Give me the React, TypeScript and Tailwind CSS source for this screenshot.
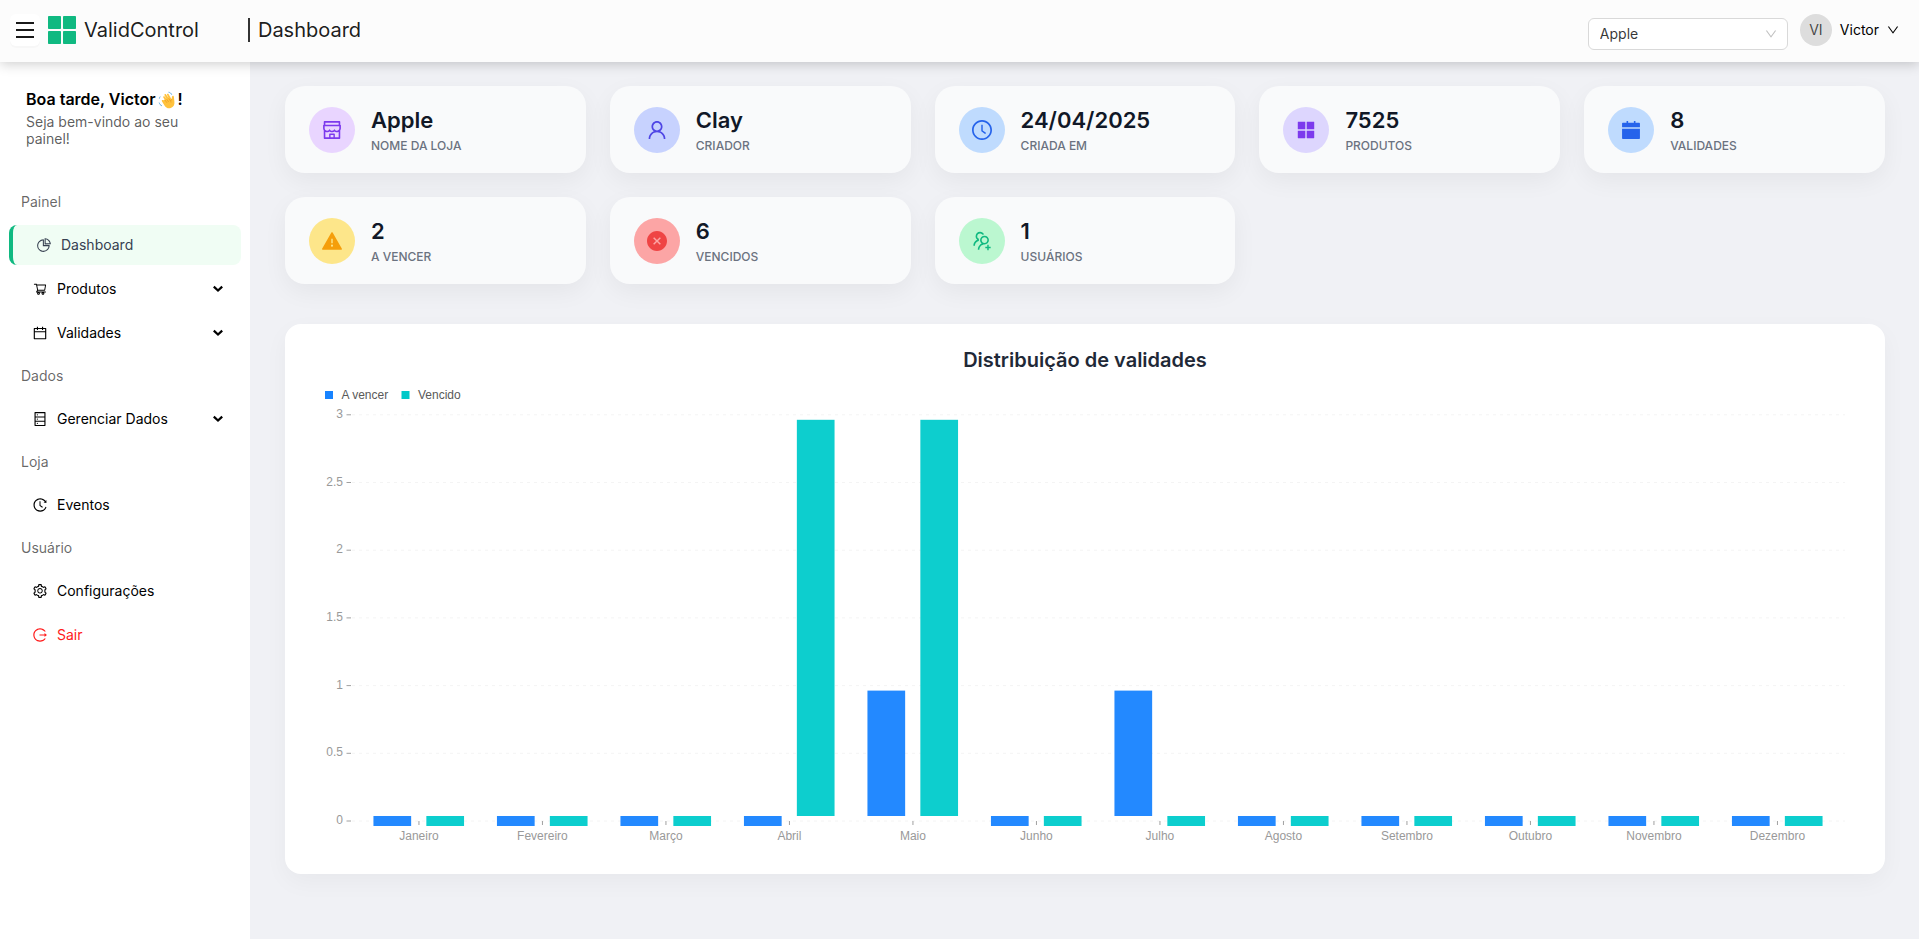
import type { ReactNode } from "react";
import type { IconType } from "react-icons";
import {
  AiFillAppstore,
  AiFillCalendar,
  AiFillCloseCircle,
  AiFillWarning,
  AiOutlineCalendar,
  AiOutlineClockCircle,
  AiOutlineDatabase,
  AiOutlineDown,
  AiOutlineHistory,
  AiOutlineLogout,
  AiOutlinePieChart,
  AiOutlineSetting,
  AiOutlineShop,
  AiOutlineShoppingCart,
  AiOutlineUser,
  AiOutlineUsergroupAdd,
} from "react-icons/ai";

// Trims the blank margin that the icon set leaves around most glyphs; the cart fills its whole box.
function Icon({ of: Glyph, className }: { of: IconType; className: string }) {
  const viewBox = Glyph === AiOutlineShoppingCart ? "0 0 1024 1024" : "64 64 896 896";
  return <Glyph viewBox={viewBox} className={className} aria-hidden="true" />;
}

function Logo() {
  return (
    <svg className="size-7" viewBox="0 0 28 28" fill="#10b981" aria-hidden="true">
      <rect width="13" height="13" rx="0.8" />
      <rect x="15" width="13" height="13" rx="0.8" />
      <rect y="15" width="13" height="13" rx="0.8" />
      <rect x="15" y="15" width="13" height="13" rx="0.8" />
    </svg>
  );
}

function Caret() {
  return (
    <svg className="h-2 w-3" viewBox="0 0 12 8" fill="none" stroke="currentColor" strokeWidth="2.2" aria-hidden="true">
      <path d="M1.8 1.6 6 5.6l4.2-4" />
    </svg>
  );
}

function Header() {
  return (
    <header className="relative z-10 flex h-[62px] items-center bg-[#fcfcfc] pr-5 pb-0.5 pl-2.5 shadow-[0_2px_12px_rgba(0,0,0,0.2)]">
      <button aria-label="Menu" className="flex h-8 w-[30px] items-center justify-center rounded-md bg-white text-black/90 shadow-[0_2px_0_rgba(0,0,0,0.02)]">
        <svg className="h-4 w-[18px]" viewBox="0 0 18 16" stroke="currentColor" strokeWidth="1.9" aria-hidden="true">
          <path d="M0 1h18M0 8h18M0 15h18" />
        </svg>
      </button>
      <a href="#" className="ml-2 flex items-center gap-2 text-xl text-black/90">
        <Logo />
        ValidControl
      </a>
      <h1 className="ml-[49px] flex items-center gap-2 text-xl text-black/90">
        <span className="h-6 w-0.5 bg-black/80" />
        Dashboard
      </h1>
      <div className="ml-auto flex items-center">
        <div className="relative mt-2 mr-3">
          <select aria-label="Loja" className="h-8 w-[200px] appearance-none rounded-md border border-[#d9d9d9] bg-white px-[11px] text-sm text-black/80">
            <option>Apple</option>
          </select>
          <span className="pointer-events-none absolute top-2.5 right-[11px] text-black/25">
            <Icon of={AiOutlineDown} className="size-3" />
          </span>
        </div>
        <button className="flex items-center gap-2 text-sm text-black">
          <span className="flex size-8 items-center justify-center rounded-full bg-[#dddddd] text-black/70">VI</span>
          Victor
          <Icon of={AiOutlineDown} className="size-3" />
        </button>
      </div>
    </header>
  );
}

function Group({ title, children }: { title: string; children: ReactNode }) {
  return (
    <section>
      <h2 className="my-0.5 px-[21px] py-2.5 text-sm leading-[22px] text-black/60">{title}</h2>
      <ul className="flex flex-col gap-1">{children}</ul>
    </section>
  );
}

type ItemProps = { icon: IconType; label: string; expandable?: boolean; danger?: boolean };

function Item({ icon, label, expandable, danger }: ItemProps) {
  return (
    <li className="px-1">
      <a href="#" className={`flex h-10 items-center gap-2.5 rounded-lg pr-[22px] pl-[29px] text-sm ${danger ? "text-[#ff1a1a]" : "text-black"}`}>
        <Icon of={icon} className="size-3.5" />
        {label}
        {expandable && (
          <span className="ml-auto">
            <Caret />
          </span>
        )}
      </a>
    </li>
  );
}

function Wave() {
  return (
    <svg className="mx-0.5 inline-block size-[18px] align-[-4px]" viewBox="0 0 18 18" aria-label="👋" role="img">
      <path
        d="M5.2 8.4 3.7 6.1c-.6-1 .7-1.8 1.4-.9l2 2.6-2.2-4c-.5-1 .9-1.8 1.6-.8l2.6 4-1.700-3.600c-.4-1 .9-1.600 1.500-.7l3 5.100.5-2.400c.2-1.400 1.900-1.200 1.900.2l.5 4.700c.4 3.100-1 5.400-3.600 6.300-2.700.8-4.900-.3-6.300-2.600L2.300 9.800c-.5-1 .6-1.700 1.300-.9z"
        transform="translate(1.6 .4)"
        fill="#ffc23d"
      />
      <path d="m6.800 8.800 2.200 3M8.700 8.200l2 2.800M10.700 7.400l1.800 2.600M13.900 8.200c-1 .8-1.400 1.900-.9 3.300" stroke="#e8961e" strokeWidth=".7" fill="none" />
      <path d="M10.500 1.200c1.500.2 2.700 1.100 3.200 2.500M1.200 11.600c.3 1.500 1.300 2.600 2.700 3.200M1.400 7.600c.1-.8.300-1.400.8-2" stroke="#4fa3dc" strokeWidth=".9" fill="none" />
    </svg>
  );
}

function Sidebar() {
  return (
    <aside className="w-[250px] shrink-0 bg-white">
      <div className="px-[26px] pt-[27px] pb-8">
        <p className="text-base leading-5 font-semibold whitespace-nowrap text-black">
          Boa tarde, Victor
          <Wave />!
        </p>
        <p className="mt-1 text-sm leading-[17px] text-black/65">Seja bem-vindo ao seu painel!</p>
      </div>
      <nav>
        <Group title="Painel">
          <li className="px-[9px]">
            <a href="#" aria-current="page" className="flex h-10 items-center gap-2.5 rounded-lg border-l-4 border-[#10b981] bg-[#f0fdf4] pl-6 text-sm text-[#374151]">
              <Icon of={AiOutlinePieChart} className="size-3.5" />
              Dashboard
            </a>
          </li>
          <Item icon={AiOutlineShoppingCart} label="Produtos" expandable />
          <Item icon={AiOutlineCalendar} label="Validades" expandable />
        </Group>
        <Group title="Dados">
          <Item icon={AiOutlineDatabase} label="Gerenciar Dados" expandable />
        </Group>
        <Group title="Loja">
          <Item icon={AiOutlineHistory} label="Eventos" />
        </Group>
        <Group title="Usuário">
          <Item icon={AiOutlineSetting} label="Configurações" />
          <Item icon={AiOutlineLogout} label="Sair" danger />
        </Group>
      </nav>
    </aside>
  );
}

const stats = [
  { value: "Apple", label: "Nome da loja", icon: AiOutlineShop, tone: "bg-[#e9d5ff] text-[#7c3aed]" },
  { value: "Clay", label: "Criador", icon: AiOutlineUser, tone: "bg-[#c7d2fe] text-[#4f46e5]" },
  { value: "24/04/2025", label: "Criada em", icon: AiOutlineClockCircle, tone: "bg-[#bfdbfe] text-[#2563eb]" },
  { value: "7525", label: "Produtos", icon: AiFillAppstore, tone: "bg-[#ddd6fe] text-[#7c3aed]" },
  { value: "8", label: "Validades", icon: AiFillCalendar, tone: "bg-[#bfdbfe] text-[#2563eb]" },
  { value: "2", label: "A vencer", icon: AiFillWarning, tone: "bg-[#fde68a] text-[#f59e0b]" },
  { value: "6", label: "Vencidos", icon: AiFillCloseCircle, tone: "bg-[#fca5a5] text-[#ef4444]" },
  { value: "1", label: "Usuários", icon: AiOutlineUsergroupAdd, tone: "bg-[#bbf7d0] text-[#10b981]" },
];

function Stats() {
  return (
    <div className="grid grid-cols-5 gap-6">
      {stats.map((s) => (
        <div key={s.label} className="flex h-[87px] items-center gap-4 rounded-[20px] bg-[#f9fafb] px-6 shadow-[0_8px_24px_rgba(0,0,0,0.05)]">
          <span className={`flex size-[46px] shrink-0 items-center justify-center rounded-full ${s.tone}`}>
            <Icon of={s.icon} className="size-5" />
          </span>
          <div>
            <p className="text-[22px] leading-[30px] font-semibold text-[#111827]">{s.value}</p>
            <p className="mt-0.5 text-xs leading-[18px] font-medium text-[#6b7280] uppercase">{s.label}</p>
          </div>
        </div>
      ))}
    </div>
  );
}

const months = [
  { name: "Janeiro", due: 0, expired: 0 },
  { name: "Fevereiro", due: 0, expired: 0 },
  { name: "Março", due: 0, expired: 0 },
  { name: "Abril", due: 0, expired: 3 },
  { name: "Maio", due: 1, expired: 3 },
  { name: "Junho", due: 0, expired: 0 },
  { name: "Julho", due: 1, expired: 0 },
  { name: "Agosto", due: 0, expired: 0 },
  { name: "Setembro", due: 0, expired: 0 },
  { name: "Outubro", due: 0, expired: 0 },
  { name: "Novembro", due: 0, expired: 0 },
  { name: "Dezembro", due: 0, expired: 0 },
];

const LEFT = 48.2;
const STEP = 123.5;
const BASE = 442;
const UNIT = 135.4;

function Bar({ x, value, color }: { x: number; value: number; color: string }) {
  const top = value === 0 ? BASE - 5 : BASE + 5 - value * UNIT;
  const height = value === 0 ? 10 : value * UNIT - 10;
  return <rect x={x} y={top} width="37.7" height={height} fill={color} />;
}

function Chart() {
  return (
    <section className="mt-10 rounded-2xl bg-white px-6 pt-6 pb-7 shadow-[0_8px_24px_rgba(0,0,0,0.04)]">
      <h2 className="text-center text-xl leading-6 font-semibold text-[#1f2937]">Distribuição de validades</h2>
      <svg className="mt-[7px] block h-auto w-full font-['Liberation_Sans',Arial,sans-serif] text-xs" viewBox="0 0 1552 467" role="img" aria-label="Distribuição de validades">
        <g fill="#595959">
          <rect x="16" y="12" width="8" height="8" fill="#1783ff" />
          <text x="32.5" y="20">A vencer</text>
          <rect x="92.5" y="12" width="8" height="8" fill="#00c9c9" />
          <text x="109" y="20">Vencido</text>
        </g>
        {[0, 0.5, 1, 1.5, 2, 2.5, 3].map((v) => {
          const y = BASE - v * UNIT;
          return (
            <g key={v}>
              <line x1="43" x2="1536" y1={y} y2={y} stroke="#f4f4f4" strokeDasharray="3 4" />
              <line x1="37.5" x2="42" y1={y} y2={y} stroke="#a0a0a0" />
              <text x="34" y={y + 3} textAnchor="end" fill="#999999">{v}</text>
            </g>
          );
        })}
        {months.map((m, i) => {
          const cx = LEFT + STEP * (i + 0.5);
          return (
            <g key={m.name}>
              <Bar x={cx - 45.5} value={m.due} color="#2389ff" />
              <Bar x={cx + 7.4} value={m.expired} color="#0dcece" />
              <line x1={cx} x2={cx} y1={BASE} y2={BASE + 4} stroke="#a0a0a0" />
              <text x={cx} y={BASE + 18.5} textAnchor="middle" fill="#999999">{m.name}</text>
            </g>
          );
        })}
      </svg>
    </section>
  );
}

export default function App() {
  return (
    <div className="flex min-h-screen flex-col bg-[#f0f1f5] font-[Inter,sans-serif]">
      <Header />
      <div className="flex flex-1">
        <Sidebar />
        <main className="min-w-0 flex-1 pt-6 pb-12 pl-px">
          <div className="mx-auto max-w-[1600px]">
            <Stats />
            <Chart />
          </div>
        </main>
      </div>
    </div>
  );
}
